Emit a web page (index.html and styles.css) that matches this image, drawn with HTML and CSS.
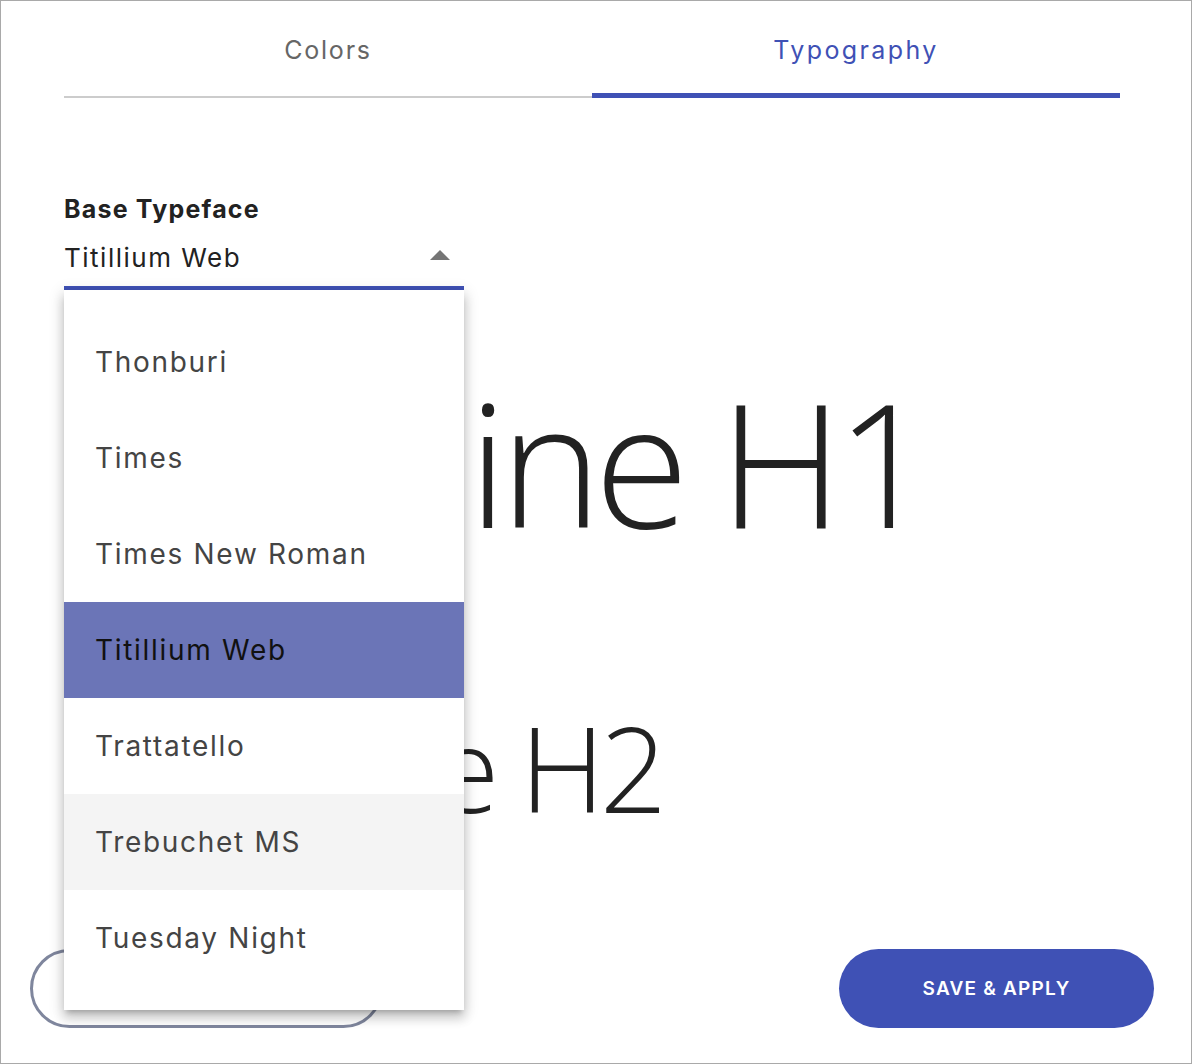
FILE: index.html
```html
<!DOCTYPE html>
<html lang="en">
<head>
<meta charset="utf-8">
<title>Theme settings – Typography</title>
<link rel="stylesheet" href="styles.css">
</head>
<body>
<div class="frame">
  <nav class="tabs">
    <div class="tab">Colors</div>
    <div class="tab active">Typography</div>
  </nav>

  <section class="field">
    <div class="label">Base Typeface</div>
    <div class="select">
      <span class="value">Titillium Web</span>
      <span class="arrow"></span>
      <ul class="menu">
        <li class="item">Thonburi</li>
        <li class="item">Times</li>
        <li class="item">Times New Roman</li>
        <li class="item selected">Titillium Web</li>
        <li class="item">Trattatello</li>
        <li class="item hover">Trebuchet MS</li>
        <li class="item">Tuesday Night</li>
      </ul>
    </div>
  </section>

  <section class="preview">
    <h1 class="h1">Headline H1</h1>
    <h2 class="h2">Headline H2</h2>
  </section>

  <div class="actions">
    <button class="btn btn-outline">RESET</button>
    <button class="btn btn-primary">SAVE &amp; APPLY</button>
  </div>
</div>
</body>
</html>
```

FILE: styles.css
```css
* { box-sizing: border-box; }
html, body { margin: 0; padding: 0; background: #fff; }
body { font-family: "Inter", "Liberation Sans", sans-serif; color: #222; }

.frame {
  width: 1192px;
  height: 1064px;
  border: 1px solid #a9a9a9;
  overflow: hidden;
}

.tabs {
  display: grid;
  grid-template-columns: 1fr 1fr;
  margin: 0 71px 0 63px;
}
.tab {
  height: 97px;
  display: flex;
  align-items: center;
  justify-content: center;
  padding-top: 3px;
  font-size: 25px;
  letter-spacing: 1.8px;
  color: #666;
  border-bottom: 2px solid #cccccc;
}
.tab.active {
  color: #3f51b5;
  letter-spacing: 2.4px;
  border-bottom-color: #3f51b5;
  box-shadow: inset 0 -3px 0 #3f51b5;
}

.field {
  margin: 96px 0 0 63px;
  width: 400px;
}
.label {
  font-size: 25px;
  line-height: 30px;
  font-weight: 700;
  letter-spacing: 1.2px;
  color: #222;
}
.select {
  position: relative;
  margin-top: 4px;
  height: 62px;
  display: flex;
  align-items: center;
  justify-content: space-between;
  border-bottom: 4px solid #3f51b5;
}
.value {
  font-size: 26px;
  letter-spacing: 1.5px;
  color: #222;
}
.arrow {
  width: 0;
  height: 0;
  margin-right: 14px;
  margin-top: -4px;
  border-left: 10px solid transparent;
  border-right: 10px solid transparent;
  border-bottom: 10px solid #757575;
}

.menu {
  position: absolute;
  top: calc(100% + 4px);
  left: 0;
  width: 400px;
  margin: 0;
  padding: 24px 0;
  list-style: none;
  background: #fff;
  z-index: 5;
  box-shadow: 0 5px 5px -3px rgba(0,0,0,.2), 0 8px 10px 1px rgba(0,0,0,.14), 0 3px 14px 2px rgba(0,0,0,.12);
}
.item {
  height: 96px;
  display: flex;
  align-items: center;
  padding-left: 31px;
  font-size: 28px;
  letter-spacing: 1.7px;
  color: #444;
}
.item.selected { background: #6b75b7; color: #111; }
.item.hover { background: #f4f4f4; }

.preview { margin-left: 63px; }
.h1, .h2 {
  margin: 0;
  font-family: "Open Sans", "DejaVu Sans", sans-serif;
  font-weight: 300;
  color: #222;
  white-space: nowrap;
}
.h1 {
  margin: 85px 0 0 -10px;
  font-size: 172px;
  line-height: 172px;
  letter-spacing: -7.2px;
}
.h2 {
  margin-top: 162px;
  font-size: 118px;
  line-height: 118px;
  letter-spacing: -5px;
}

.actions {
  display: flex;
  justify-content: space-between;
  margin: 122px 37px 0 29px;
}
.btn {
  height: 79px;
  border-radius: 40px;
  font-family: "Inter", "Liberation Sans", sans-serif;
  font-size: 19px;
  font-weight: 600;
  letter-spacing: 1.2px;
}
.btn-outline {
  width: 353px;
  background: #fff;
  border: 3px solid #7f869d;
  color: #7f869d;
}
.btn-primary {
  width: 315px;
  background: #3f51b5;
  border: none;
  color: #fff;
}
```
